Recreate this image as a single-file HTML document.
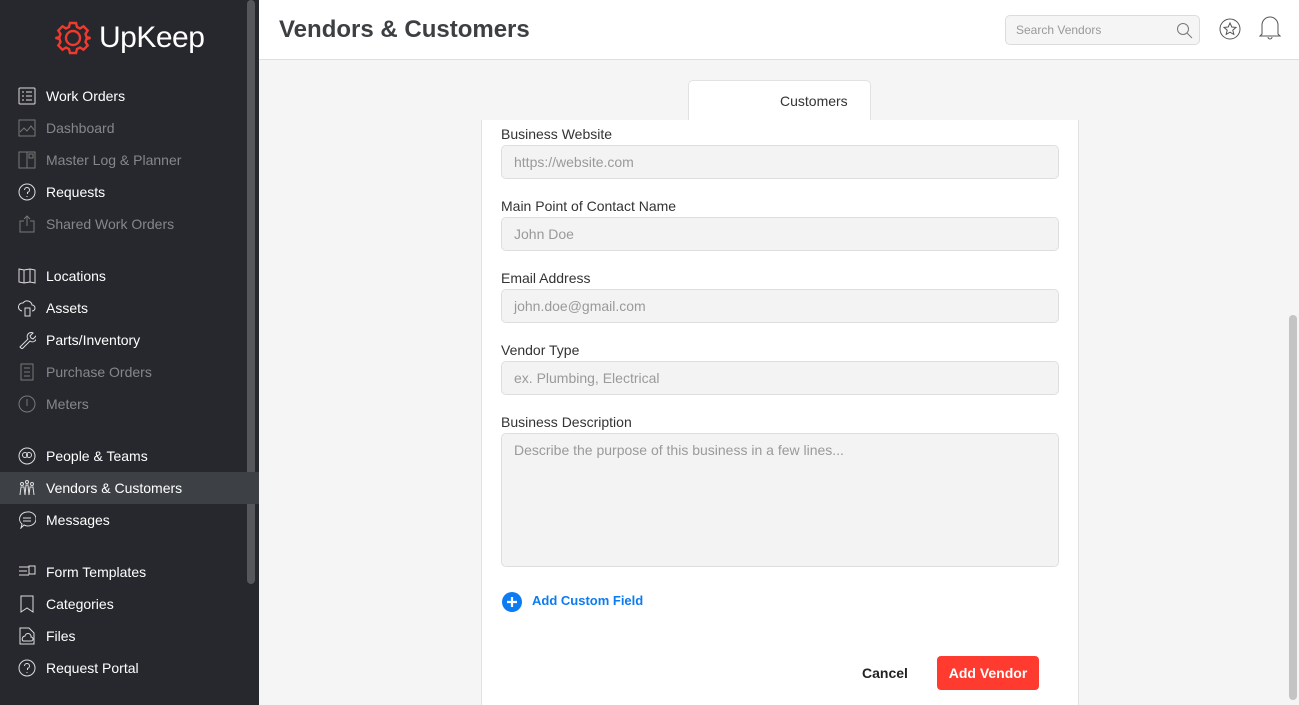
<!DOCTYPE html>
<html><head><style>
*{box-sizing:border-box;margin:0;padding:0}
html,body{width:1299px;height:705px;overflow:hidden}
body{font-family:"Liberation Sans",sans-serif;background:#f5f5f5;position:relative}
.sb{position:absolute;left:0;top:0;width:259px;height:705px;background:#26282d}
.sbar{position:absolute;left:247px;top:0;width:8px;height:584px;background:#55575b;border-radius:4px}
.logo{position:absolute;left:55px;top:20px;display:flex;align-items:center}
.logo span{color:#fff;font-size:30px;margin-left:8px;letter-spacing:-0.5px}
.item{position:absolute;left:0;width:259px;height:32px;display:flex;align-items:center;color:#fff;font-size:14px}
.item svg{position:absolute;left:18px;top:7px}
.item b{font-weight:normal;position:absolute;left:46px}
.dim{color:#85878b}
.act{background:#3d4045}
.hdr{position:absolute;left:259px;top:0;width:1040px;height:60px;background:#fff;border-bottom:1px solid #e0e0e0}
.hdr h1{position:absolute;left:20px;top:16px;font-size:24px;color:#3c4043;font-weight:bold}
.search{position:absolute;left:746px;top:15px;width:195px;height:30px;border:1px solid #dcdcdc;background:#f5f5f5;border-radius:5px;font-size:12px;color:#999;padding:7px 10px}
.card{position:absolute;left:481px;top:120px;width:598px;height:585px;background:#fff;border-left:1px solid #e2e2e2;border-right:1px solid #e2e2e2}
.tab{position:absolute;left:688px;top:80px;width:183px;height:40px;background:#fff;border:1px solid #e2e2e2;border-bottom:none;border-radius:5px 5px 0 0;font-size:14px;color:#333;padding:12px 0 0 91px}
.lbl{position:absolute;left:501px;font-size:14px;color:#333}
.inp{position:absolute;left:501px;width:558px;height:34px;background:#f3f3f3;border:1px solid #dedede;border-radius:5px;font-size:14px;color:#9a9a9a;padding:8px 12px}
.rs{position:absolute;left:1289px;top:315px;width:8px;height:385px;background:#c4c4c4;border-radius:4px}
</style></head><body>
<div class="sb">
<div class="sbar"></div>
<div class="logo"><svg width="36" height="36" viewBox="0 0 36 36"><g fill="none" stroke="#f03a2e" stroke-width="2.4"><circle cx="18" cy="18" r="7"/><path d="M15 3h6l1 4 3 1.5 3.5-2.2 4.2 4.2-2.2 3.5L31.5 17l4 1v0l-4 1-1 3 2.2 3.5-4.2 4.2-3.5-2.2-3 1.5-1 4h-6l-1-4-3-1.5-3.5 2.2-4.2-4.2 2.2-3.5L4.5 19l-4-1 4-1 1-3-2.2-3.5 4.2-4.2 3.5 2.2 3-1.5z"/></g></svg><span>UpKeep</span></div>
<div class="item" style="top:80px"><svg width="18" height="18" fill="none" stroke="#ddd"><rect x="1" y="1" width="16" height="16" rx="1"/><path d="M4 5h2M4 9h2M4 13h2M8 5h6M8 9h6M8 13h6"/></svg><b>Work Orders</b></div>
<div class="item dim" style="top:112px"><svg width="18" height="18" fill="none" stroke="#777"><rect x="1" y="1" width="16" height="16"/><path d="M2 13l4-4 3 3 4-5 3 4"/></svg><b>Dashboard</b></div>
<div class="item dim" style="top:144px"><svg width="18" height="18" fill="none" stroke="#777"><rect x="1" y="1" width="16" height="16"/><path d="M9 1v16M11 3h4v4h-4z"/></svg><b>Master Log &amp; Planner</b></div>
<div class="item" style="top:176px"><svg width="18" height="18" fill="none" stroke="#ddd"><circle cx="9" cy="9" r="8"/><path d="M6.5 7a2.5 2.5 0 1 1 3 2.4V11M9 13v1"/></svg><b>Requests</b></div>
<div class="item dim" style="top:208px"><svg width="18" height="18" fill="none" stroke="#777"><path d="M6 6H2v11h14V6h-4M9 1v10M6 4l3-3 3 3"/></svg><b>Shared Work Orders</b></div>
<div class="item" style="top:260px"><svg width="18" height="18" fill="none" stroke="#ddd"><path d="M1 2l5 1 6-1 5 1v13l-5-1-6 1-5-1zM6 3v13M12 2v13"/></svg><b>Locations</b></div>
<div class="item" style="top:292px"><svg width="18" height="18" fill="none" stroke="#ddd"><path d="M4 12a4 4 0 0 1 1-8 5 5 0 0 1 9 2 3 3 0 0 1 0 6"/><rect x="7" y="9" width="5" height="8"/></svg><b>Assets</b></div>
<div class="item" style="top:324px"><svg width="18" height="18" fill="none" stroke="#ddd"><path d="M2 16l8-8a4 4 0 0 1 5-6l-3 3 1 2 2 1 3-3a4 4 0 0 1-6 5l-8 8z"/></svg><b>Parts/Inventory</b></div>
<div class="item dim" style="top:356px"><svg width="18" height="18" fill="none" stroke="#777"><rect x="3" y="1" width="12" height="16"/><path d="M6 5h6M6 9h6M6 13h6"/></svg><b>Purchase Orders</b></div>
<div class="item dim" style="top:388px"><svg width="18" height="18" fill="none" stroke="#777"><circle cx="9" cy="9" r="8"/><path d="M9 4v7"/></svg><b>Meters</b></div>
<div class="item" style="top:440px"><svg width="18" height="18" fill="none" stroke="#ddd"><circle cx="9" cy="9" r="8"/><circle cx="7" cy="8" r="2.5"/><circle cx="11" cy="8" r="2.5"/></svg><b>People &amp; Teams</b></div>
<div class="item act" style="top:472px"><svg width="18" height="18" fill="none" stroke="#ddd"><circle cx="4" cy="5" r="1.5"/><circle cx="9" cy="3" r="1.5"/><circle cx="14" cy="5" r="1.5"/><path d="M2 16l1-8h3l1 8M7 16l1-10h2l1 10M11 16l1-8h3l1 8"/></svg><b>Vendors &amp; Customers</b></div>
<div class="item" style="top:504px"><svg width="18" height="18" fill="none" stroke="#ddd"><path d="M9 1a8 7 0 1 1-3 13l-3 3 1-4a8 7 0 0 1 5-12zM5 7h8M5 10h8"/></svg><b>Messages</b></div>
<div class="item" style="top:556px"><svg width="18" height="18" fill="none" stroke="#ddd"><path d="M1 4h10M1 8h8M1 12h10M11 3h6v8h-6z"/></svg><b>Form Templates</b></div>
<div class="item" style="top:588px"><svg width="18" height="18" fill="none" stroke="#ddd"><path d="M3 1h12v16l-6-4-6 4z"/></svg><b>Categories</b></div>
<div class="item" style="top:620px"><svg width="18" height="18" fill="none" stroke="#ddd"><path d="M2 1h9l5 5v11H2z"/><path d="M5 14a3 3 0 0 1 2-5 3 3 0 0 1 6 1 2 2 0 0 1 0 4z"/></svg><b>Files</b></div>
<div class="item" style="top:652px"><svg width="18" height="18" fill="none" stroke="#ddd"><circle cx="9" cy="9" r="8"/><path d="M6.5 7a2.5 2.5 0 1 1 3 2.4V11M9 13v1"/></svg><b>Request Portal</b></div>
</div>
<div class="hdr"><h1>Vendors &amp; Customers</h1>
<div class="search">Search Vendors<svg style="position:absolute;right:5px;top:6px" width="18" height="18" fill="none" stroke="#777"><circle cx="7" cy="7" r="5.5"/><path d="M11 11l5 5"/></svg></div>
<svg style="position:absolute;left:960px;top:18px" width="22" height="22" fill="none" stroke="#555"><circle cx="11" cy="11" r="10"/><path d="M11 5l1.8 4 4.2.4-3.2 2.8 1 4.2L11 14.2 7.2 16.4l1-4.2L5 9.4l4.2-.4z"/></svg>
<svg style="position:absolute;left:1000px;top:15px" width="22" height="26" fill="none" stroke="#555"><path d="M3 19V10a8 8 0 0 1 16 0v9l2 2H1zM9 22a2 2 0 0 0 4 0"/></svg>
</div>
<div class="card"></div>
<div class="tab">Customers</div>
<div class="lbl" style="top:126px">Business Website</div>
<div class="inp" style="top:145px">https://website.com</div>
<div class="lbl" style="top:198px">Main Point of Contact Name</div>
<div class="inp" style="top:217px">John Doe</div>
<div class="lbl" style="top:270px">Email Address</div>
<div class="inp" style="top:289px">john.doe@gmail.com</div>
<div class="lbl" style="top:342px">Vendor Type</div>
<div class="inp" style="top:361px">ex. Plumbing, Electrical</div>
<div class="lbl" style="top:414px">Business Description</div>
<div class="inp" style="top:433px;height:134px">Describe the purpose of this business in a few lines...</div>
<svg style="position:absolute;left:502px;top:592px" width="20" height="20"><circle cx="10" cy="10" r="10" fill="#0c7cf2"/><path d="M10 5v10M5 10h10" stroke="#fff" stroke-width="2.2"/></svg>
<div style="position:absolute;left:532px;top:593px;font-size:13px;font-weight:bold;color:#0c7cf2">Add Custom Field</div>
<div style="position:absolute;left:862px;top:665px;font-size:14px;font-weight:bold;color:#222">Cancel</div>
<div style="position:absolute;left:937px;top:656px;width:102px;height:34px;background:#ff3b30;border-radius:4px;color:#fff;font-size:14px;font-weight:bold;text-align:center;line-height:34px">Add Vendor</div>
<div class="rs"></div>
</body></html>
